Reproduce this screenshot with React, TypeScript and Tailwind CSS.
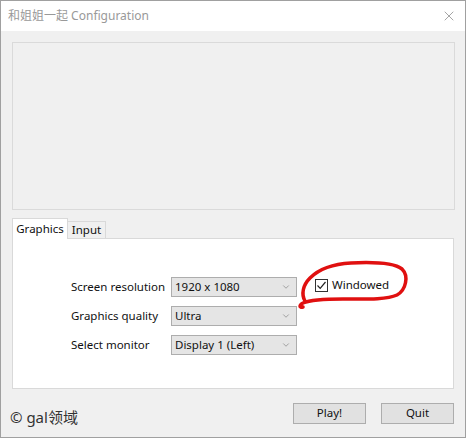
import { ChevronDown, X } from "lucide-react";

const font = { fontFamily: '"Noto Sans", "Noto Sans CJK SC", sans-serif' };

function Select({ value }: { value: string }) {
  return (
    <div className="flex h-[20px] w-[126px] items-center justify-between border border-[#adadad] bg-[#e5e5e5] pl-[3px] pr-[5px] text-[11.5px] text-[#111]">
      <span>{value}</span>
      <ChevronDown className="h-[10px] w-[10px] text-[#666]" strokeWidth={1.3} />
    </div>
  );
}

export default function App() {
  const rows = [
    { label: "Screen resolution", value: "1920 x 1080" },
    { label: "Graphics quality", value: "Ultra" },
    { label: "Select monitor", value: "Display 1 (Left)" },
  ];

  return (
    <div
      className="relative flex h-[438px] w-[466px] flex-col border border-[#a0a0a0] bg-[#f0f0f0]"
      style={font}
    >
      {/* Title bar */}
      <div className="flex h-[30px] items-center justify-between bg-white pl-[7px] pr-[8px]">
        <span className="text-[12px] text-[#999]">和姐姐一起 Configuration</span>
        <X className="h-[16px] w-[16px] text-[#777]" strokeWidth={1} />
      </div>

      {/* Preview area */}
      <div className="ml-[11px] mt-[11px] h-[168px] w-[443px] border border-[#dadada] bg-[#f0f0f0]" />

      {/* Tabs */}
      <div className="ml-[11px] mt-[8px] flex items-end">
        <div className="relative z-10 -mb-px flex h-[21px] w-[56px] items-center justify-center border border-b-0 border-[#d9d9d9] bg-white text-[11.5px] text-[#111]">
          Graphics
        </div>
        <div className="flex h-[17px] w-[38px] items-center justify-center border border-b-0 border-l-0 border-[#d9d9d9] bg-[#f0f0f0] text-[11.5px] text-[#111]">
          Input
        </div>
      </div>
      <div className="ml-[11px] flex h-[151px] w-[442px] flex-col gap-[9px] border border-[#d9d9d9] bg-white pl-[58px] pt-[38px]">
        {rows.map((r, i) => (
          <div key={r.label} className="flex items-center">
            <span className="w-[100px] text-[11.5px] text-[#111]">{r.label}</span>
            <Select value={r.value} />
            {i === 0 && (
              <div className="ml-[18px] flex items-center gap-[4px] self-start text-[11.5px] text-[#111]">
                <span className="flex h-[13px] w-[13px] items-center justify-center border border-[#333] bg-white">
                  <svg width="11" height="11" viewBox="0 0 11 11">
                    <path d="M1.5 5.5 L4.2 8.3 L9.5 2" fill="none" stroke="#222" strokeWidth="1.2" />
                  </svg>
                </span>
                <span className="-mt-[1px]">Windowed</span>
              </div>
            )}
          </div>
        ))}
      </div>

      {/* Footer */}
      <div className="flex flex-1 items-center justify-between pl-[9px] pr-[11px]">
        <span className="mt-[8px] text-[15px] text-[#333]">© gal领域</span>
        <div className="flex gap-[15px]">
          <button className="h-[21px] w-[73px] border border-[#adadad] bg-[#e1e1e1] text-[11.5px] text-[#111]">
            Play!
          </button>
          <button className="h-[21px] w-[73px] border border-[#adadad] bg-[#e1e1e1] text-[11.5px] text-[#111]">
            Quit
          </button>
        </div>
      </div>

      {/* Red hand-drawn mark */}
      <svg className="pointer-events-none absolute left-0 top-0" width="466" height="438">
        <path
          d="M304 300 C 300 293, 302 284, 309 277 C 318 268, 332 263, 350 262 C 370 261, 392 261, 401 268 C 408 275, 405 289, 396 294 C 385 299, 362 298, 342 298 C 324 298, 309 299, 302 302 C 298 304, 298 307, 302 306"
          fill="none"
          stroke="#e01010"
          strokeWidth="3.5"
          strokeLinecap="round"
        />
      </svg>
    </div>
  );
}
